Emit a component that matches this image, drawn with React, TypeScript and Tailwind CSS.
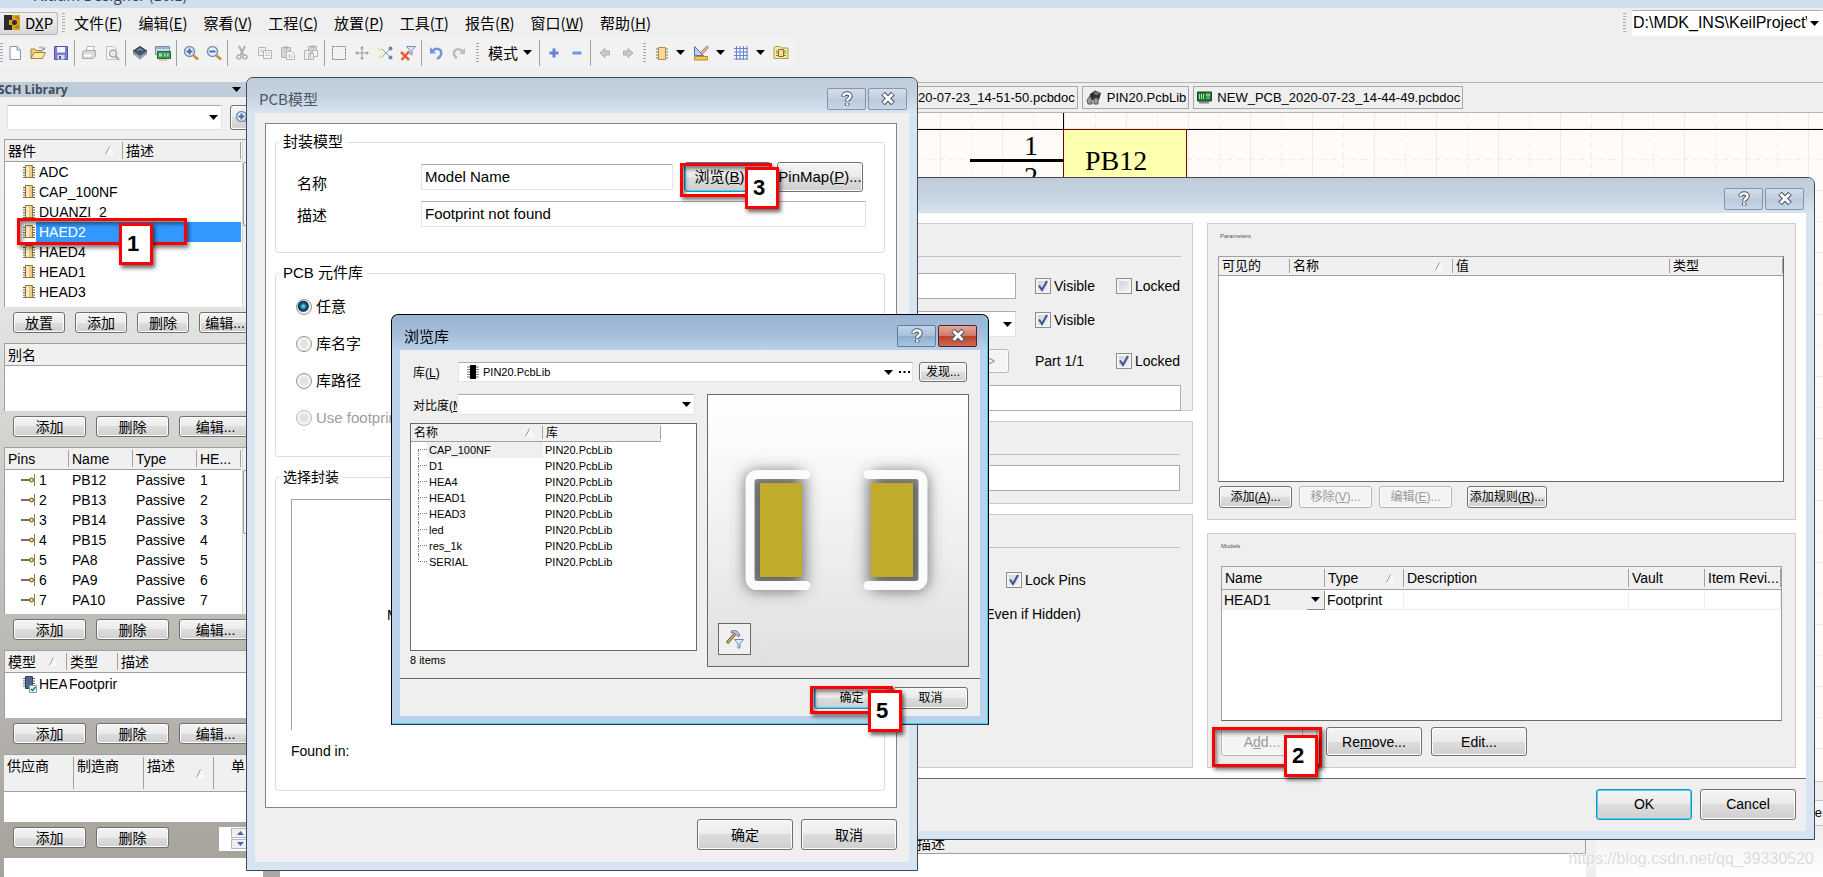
import { useState } from "react"
import type { ReactNode } from "react"

const cjk = "font-['Liberation_Sans','Noto_Sans_CJK_SC',sans-serif]"
const menuFont = "font-['Noto_Sans_CJK_SC',sans-serif]"
const btnBase = "shrink-0 whitespace-nowrap border rounded-[3px] bg-[linear-gradient(#f4f4f4,#ebebeb_50%,#dddddd_50%,#cfcfcf)] disabled:border-[#b4b8ba] disabled:bg-none disabled:bg-[#f4f4f4] disabled:text-[#9a9a9a]"
const btn = btnBase + " border-[#707070] shadow-[inset_0_0_0_1px_#fcfcfc]"
const btnBlue = btnBase + " border-[#2a8dbb] shadow-[inset_0_0_0_1px_#49d3fb]"
const field = "min-w-0 rounded-[1px] border border-[#e2e3ea] border-t-[#abadb3] bg-white px-[3px] pb-[2px] outline-none"

const menus = [
  ["文件", "F"], ["编辑", "E"], ["察看", "V"], ["工程", "C"], ["放置", "P"],
  ["工具", "T"], ["报告", "R"], ["窗口", "W"], ["帮助", "H"],
]
const parts = ["ADC", "CAP_100NF", "DUANZI_2", "HAED2", "HAED4", "HEAD1", "HEAD3"]
const pins = [
  ["1", "PB12"], ["2", "PB13"], ["3", "PB14"], ["4", "PB15"],
  ["5", "PA8"], ["6", "PA9"], ["7", "PA10"],
]
const footprints = ["CAP_100NF", "D1", "HEA4", "HEAD1", "HEAD3", "led", "res_1k", "SERIAL"]

type Col = { label: string; w: string; sort?: boolean }

function Arrow({ className = "" }: { className?: string }) {
  return (
    <svg className={`pointer-events-none shrink-0 ${className}`} width="9" height="5" viewBox="0 0 9 5">
      <path d="M0 0h9L4.5 5z" fill="#000" />
    </svg>
  )
}

function Sort() {
  return (
    <svg width="9" height="9" viewBox="0 0 9 9" className="shrink-0 self-center">
      <path d="M8 8.5H1L4.5 1z" fill="#f6f6f6" stroke="#fff" />
      <path d="M.5 8.5L4.5 .5" stroke="#9a9a9a" fill="none" />
    </svg>
  )
}

function Head({ cols, h, align = "items-center" }: { cols: Col[]; h: string; align?: string }) {
  return (
    <thead>
      <tr>
        {cols.map((c) => (
          <th key={c.label} className={`${c.w} border-b border-[#a0a0a0] bg-[#f0f0f0] p-0 py-[2px] text-left font-normal`}>
            <div className={`flex justify-between gap-1 overflow-hidden whitespace-nowrap border-r border-[#a0a0a0] pl-[3px] pr-2 ${align} ${h}`}>
              <span>{c.label}</span>
              {c.sort && <Sort />}
            </div>
          </th>
        ))}
      </tr>
    </thead>
  )
}

function Combo({ label, value = "", className = "", children }: { label: string; value?: string; className?: string; children?: ReactNode }) {
  return (
    <div className={`flex items-center border border-[#e2e3ea] border-t-[#abadb3] bg-white ${className}`}>
      {children}
      <select aria-label={label} className="h-full min-w-0 flex-1 appearance-none bg-transparent outline-none">
        <option>{value}</option>
      </select>
      <Arrow className="mx-[3px]" />
    </div>
  )
}

function Check({ label, checked = false, className = "" }: { label: string; checked?: boolean; className?: string }) {
  const [on, setOn] = useState(checked)
  return (
    <label className={`flex items-center gap-[3px] whitespace-nowrap ${className}`}>
      <span className="grid">
        <input
          type="checkbox"
          checked={on}
          onChange={() => setOn(!on)}
          className="col-start-1 row-start-1 h-4 w-4 appearance-none border border-[#8e8f8f] bg-[linear-gradient(135deg,#c9ced6,#f8f8f8)] shadow-[inset_0_0_0_2px_#f4f4f4]"
        />
        {on && (
          <svg className="pointer-events-none col-start-1 row-start-1" width="16" height="16" viewBox="0 0 16 16">
            <path d="M4 7.5l3 4.500 5-9" fill="none" stroke="#3f5595" strokeWidth="2.200" />
          </svg>
        )}
      </span>
      {label}
    </label>
  )
}

function CaptionButtons({ red = false }: { red?: boolean }) {
  const base = "flex h-[22px] w-[39px] items-center justify-center rounded-[2px] border"
  const plain = "border-[#8593ab] bg-[linear-gradient(#d2deea,#c3cfdf_50%,#b9c8da_50%,#c8d7e6)]"
  const help = red ? "border-[#5f7c9f] bg-[linear-gradient(#c0d3e8,#a8c0dc_50%,#8eabcc_50%,#a9c6e2)]" : plain
  const close = red ? "border-[#5b2024] bg-[linear-gradient(#e2a79b,#d1776a_50%,#b93f29_50%,#cf6a50)]" : plain
  return (
    <div className="flex gap-[2px]">
      <button aria-label="Help" className={`${base} ${help}`}>
        <svg width="14" height="16" viewBox="0 0 14 16" fill="none">
          <path d="M3.500 5.500C3.500 1.500 10.500 1.500 10.500 5.200c0 2.300-3.300 2.300-3.300 5.300M7.200 12v2.500" stroke="#4c5566" strokeWidth="4.500" />
          <path d="M3.500 5C3.500 1.500 10.500 1.500 10.500 5.200c0 2.300-3.300 2.300-3.300 4.800M7.200 12.300v1.900" stroke="#fff" strokeWidth="2.400" />
        </svg>
      </button>
      <button aria-label="Close" className={`${base} ${close}`}>
        <svg width="14" height="13" viewBox="0 0 14 13" fill="none">
          <path d="M2 1.500l10 10M12 1.500l-10 10" stroke="#4c5566" strokeWidth="5" />
          <path d="M2.500 2l9 9M11.500 2l-9 9" stroke="#fff" strokeWidth="3" />
        </svg>
      </button>
    </div>
  )
}

/* 16px toolbar drawings */
const glyphs: Record<string, ReactNode> = {
  page: <><path d="M3 1.500h7l3.500 3.500v9.500H3z" fill="#fff" stroke="#7f96b5" /><path d="M10 1.500v3.500h3.500" fill="#dbe6f5" stroke="#7f96b5" /></>,
  open: <><path d="M1 13V4h4l1.500 1.500H12V8" fill="#f5d27a" stroke="#a8823c" /><path d="M1 13.500L4 7.500h11.500L12.500 13.500z" fill="#fde9a9" stroke="#a8823c" /><path d="M9 3c2-2 4-1 4.500 1M15 2l-1 3-2.500-1.500" stroke="#6f8fc0" fill="none" /></>,
  save: <><path d="M1.500 1.500h13v13h-13z" fill="#7b7fd4" stroke="#5153a5" /><path d="M4 2h8v5.500H4z" fill="#f4f6ff" /><path d="M4.500 10h7v4.500h-7z" fill="#d7d9f3" /><path d="M6 11h2v3H6z" fill="#5153a5" /></>,
  print: <><path d="M5 6l1.500-4.500h7L12 6" fill="#fff" stroke="#b4b4b4" /><path d="M1.500 7L4 5.500h10.500V11L12 13.500H1.500z" fill="#d9d9d9" stroke="#aaa" /><path d="M3 10.500h8" stroke="#fff" strokeWidth="2" /></>,
  preview: <><path d="M2.500 1.500h7L12 4v10.500H2.500z" fill="#f8f8f8" stroke="#c0c0c0" /><circle cx="9" cy="8.500" r="3.500" fill="#e9e9e9" stroke="#aaa" strokeWidth="1.500" /><path d="M11.500 11l3.500 4" stroke="#aaa" strokeWidth="2" /></>,
  chip: <><path d="M8 1.500L15 6 8 10.500 1 6z" fill="#46566b" stroke="#2c3a4d" /><path d="M1 6v3.500L8 14.500V10.500zM15 6v3.500L8 14.500V10.500z" fill="#7d8ea5" /><path d="M2 9v2M4 10v2M6 11.500v2M10 11.500v2M12 10v2M14 9v2" stroke="#dbe2ea" /><path d="M5.500 5.500L8 4l2.500 1.500" stroke="#a5b3c5" fill="none" /></>,
  board: <><path d="M.5 1.500h14v8H.5z" fill="#c6d8ea" stroke="#7490af" /><path d="M1 3h13" stroke="#7490af" /><path d="M2.500 6.500h13v7h-13z" fill="#3c9a5f" stroke="#23673c" /><path d="M4 8.500h3v3H4zM9 8.500h1.500v3H9zM12 8.500h1.500v3H12z" fill="#a6dcae" /><path d="M4 15h8" stroke="#c9a544" /></>,
  zoomin: <><circle cx="6.500" cy="6.500" r="5" fill="#eaf2fc" stroke="#7a91b5" strokeWidth="1.500" /><path d="M6.500 3.500v6M3.500 6.500h6" stroke="#476ca8" strokeWidth="2" /><path d="M10.500 10.500l4.500 4" stroke="#c59a3c" strokeWidth="3" /></>,
  zoomout: <><circle cx="6.500" cy="6.500" r="5" fill="#eaf2fc" stroke="#7a91b5" strokeWidth="1.500" /><path d="M3.500 6.500h6" stroke="#476ca8" strokeWidth="2" /><path d="M10.500 10.500l4.500 4" stroke="#c59a3c" strokeWidth="3" /></>,
  cut: <><path d="M5 1l4.500 9M11 1L6.500 10" stroke="#b0b0b0" strokeWidth="2" /><circle cx="5" cy="12" r="2" fill="none" stroke="#b0b0b0" strokeWidth="1.500" /><circle cx="11" cy="12" r="2" fill="none" stroke="#b0b0b0" strokeWidth="1.500" /></>,
  copy: <><path d="M1.500 2.500h7v8h-7z" fill="#f6f6f6" stroke="#b5b5b5" /><path d="M6.500 5.500h8v8h-8z" fill="#f6f6f6" stroke="#b5b5b5" /><path d="M8 8h5M8 10.500h5M3 5h3M3 7h3" stroke="#c5c5c5" /></>,
  paste: <><path d="M1.500 2.500h9v10h-9z" fill="#d4d4d4" stroke="#b5b5b5" /><path d="M4 1.500h4v2H4z" fill="#aaa" /><path d="M6.500 6.500h5l3 3v5h-8z" fill="#f6f6f6" stroke="#b5b5b5" /><path d="M8 10h4M8 12h5" stroke="#c5c5c5" /></>,
  pastes: <><path d="M5.500 1.500h8v9h-8z" fill="#d4d4d4" stroke="#b5b5b5" /><path d="M8 .5h4v2H8z" fill="#aaa" /><path d="M9.500 5.500h5v6h-5z" fill="#f6f6f6" stroke="#b5b5b5" /><path d="M1.500 5.500h6v9h-6zM5.500 8.500h5v6h-5z" fill="#eee" stroke="#b5b5b5" /></>,
  select: <path d="M1.500 1.500h13v13h-13z" fill="none" stroke="#5f7ea5" strokeDasharray="2 1" />,
  move: <><path d="M8 2v12M2 8h12" stroke="#999" /><path d="M8 1L10 3.500H6zM8 15L6 12.500h4zM1 8l2.500-2v4zM15 8l-2.500-2v4z" fill="#999" /></>,
  shuffle: <><path d="M5 4l4 4-4 4" fill="none" stroke="#8c9db5" /><path d="M13 4L9 8l4 4" fill="none" stroke="#8c9db5" /><circle cx="3" cy="4" r="2" fill="#f3e79b" /><circle cx="3" cy="12" r="2" fill="#f3e79b" /><circle cx="13.500" cy="3.500" r="2" fill="#5f87b8" /><circle cx="13.500" cy="12.500" r="2" fill="#5f87b8" /></>,
  clear: <><path d="M1 7l8 8M9 6.500L1.500 15" stroke="#e2603f" strokeWidth="2.500" /><path d="M6.500 1.500h9l-3.500 4V10l-2-1V5.500z" fill="#dde6f2" stroke="#7d92b3" /></>,
  undo: <><path d="M2 2v6.500h6z" fill="#6e93da" /><path d="M4.500 6C8 2 14.500 4 13 9.500 12.500 11.500 11 13 9 14" fill="none" stroke="#6e93da" strokeWidth="2.500" /></>,
  redo: <><path d="M14 3v6H8z" fill="#bcbcbc" /><path d="M11.500 6.500C8 2.500 2 4.500 3 9.500 3.500 11 4.500 12.500 6 13" fill="none" stroke="#bcbcbc" strokeWidth="2.500" /></>,
  plus: <path d="M8 3.500v9M3.500 8h9" stroke="#6585d3" strokeWidth="3" />,
  minus: <path d="M3.500 8h9" stroke="#6b9be8" strokeWidth="3" />,
  left: <path d="M3 8l5-4.500V6h4.500v4H8v2.500z" fill="#c9c9c9" stroke="#adadad" />,
  right: <path d="M13 8L8 3.500V6H3.500v4H8v2.500z" fill="#c9c9c9" stroke="#adadad" />,
  part: <><path d="M2 4h12M2 7h12M2 10h12M2 13h12" stroke="#777" /><path d="M4.500 2.500h7v12h-7z" fill="#f6d99b" stroke="#b58b42" /></>,
  draw: <><path d="M1.500 1.500v9h9z" fill="#bcd0f2" stroke="#5273b8" /><path d="M7 8l7-7 1.500 1.500L9 9.500z" fill="#e9b6a4" stroke="#a27868" /><path d="M1.500 11.500h13v3.500h-13z" fill="#f3c553" stroke="#b98c28" /></>,
  grid: <path d="M3.500 1v14M7 1v14M10.500 1v14M14 1v14M1 3.500h14M1 7h14M1 10.500h14M1 14h14" stroke="#6288cd" />,
  folder: <><path d="M1 13.500V3l1.500-1.500H7L8.500 3H15v10.500z" fill="#f3ec9e" stroke="#a8a03c" /><path d="M3 6h10M3 8h10M3 10.500h10" stroke="#777" /><path d="M5.500 4.500h5v7h-5z" fill="#f6d99b" stroke="#8a6c35" /></>,
}

function Tool({ name, w = "w-[23px]" }: { name: string; w?: string }) {
  return (
    <button aria-label={name} className={`flex h-[24px] shrink-0 items-center justify-center ${w}`}>
      <svg width="16" height="16" viewBox="0 0 16 16">{glyphs[name]}</svg>
    </button>
  )
}

function Sep() {
  return <div className="mx-[2px] h-[26px] w-px shrink-0 bg-[#a0a0a0]" />
}

function Grip() {
  return <div className="h-[20px] w-[3px] shrink-0 bg-[repeating-linear-gradient(#a8a8a8_0_1px,transparent_1px_3px)]" />
}

function MenuBar() {
  return (
    <div className={`flex h-[30px] shrink-0 items-center overflow-hidden text-[15px] leading-[22px] ${menuFont}`}>
      <button className="flex h-[23px] w-[58px] items-center gap-1 rounded-r-[3px] border border-l-0 border-[#b5b5b5] bg-[linear-gradient(#f0f0f0,#d8d8d8)] pl-1">
        <svg width="17" height="17" viewBox="0 0 17 17">
          <path d="M0 0h8v15H0z" fill="#2b2b2b" />
          <path d="M8 0h8v15H8z" fill="#d9a520" />
          <path d="M5 5h3v5H5z" fill="#d9a520" />
          <circle cx="10.500" cy="7.500" r="2.500" fill="#2b2b2b" />
          <path d="M11 2h3v3M11 12.500h3V10" stroke="#8a6508" fill="none" />
        </svg>
        <span>D<u>X</u>P</span>
      </button>
      <div className="ml-1"><Grip /></div>
      <nav className="ml-[9px] flex gap-4">
        {menus.map(([label, key]) => (
          <button key={key} className="whitespace-nowrap">{label}(<u>{key}</u>)</button>
        ))}
      </nav>
      <div className={`ml-auto flex h-[28px] items-center gap-[6px] ${cjk}`}>
        <Grip />
        <Combo label="Path" value="D:\MDK_INS\KeilProject\" className="h-[26px] w-[191px] border-transparent text-[16px]" />
      </div>
    </div>
  )
}

function ToolBar() {
  return (
    <div className={`flex h-[29px] w-[795px] shrink-0 items-center bg-[#f2f2f2] ${menuFont}`}>
      <Grip />
      <Tool name="page" /><Tool name="open" /><Tool name="save" /><Sep />
      <Tool name="print" /><Tool name="preview" /><Sep />
      <Tool name="chip" /><Tool name="board" /><Sep />
      <Tool name="zoomin" /><Tool name="zoomout" /><Sep />
      <Tool name="cut" /><Tool name="copy" /><Tool name="paste" /><Tool name="pastes" /><Sep />
      <Tool name="select" /><Tool name="move" /><Tool name="shuffle" /><Tool name="clear" /><Sep />
      <Tool name="undo" /><Tool name="redo" />
      <div className="mx-[6px]"><Grip /></div>
      <button className="ml-[3px] mr-[5px] flex shrink-0 items-center gap-[5px] whitespace-nowrap text-[15px] leading-[22px]">模式<Arrow /></button>
      <Sep />
      <Tool name="plus" /><Tool name="minus" /><Sep />
      <Tool name="left" /><Tool name="right" />
      <div className="mx-1"><Grip /></div>
      <Tool name="part" /><Arrow className="mx-[3px]" />
      <Tool name="draw" w="w-[25px]" /><Arrow className="mx-[3px]" />
      <Tool name="grid" w="w-[25px]" /><Arrow className="mx-[3px]" />
      <Tool name="folder" w="w-[25px]" />
    </div>
  )
}

function SideButtons({ edit = true }: { edit?: boolean }) {
  return (
    <div className="mb-[10px] ml-[9px] mt-[5px] flex h-[21px] gap-[10px]">
      <button className={`${btn} w-[73px]`}>添加</button>
      <button className={`${btn} w-[73px]`}>删除</button>
      {edit && <button className={`${btn} w-[73px]`}>编辑...</button>}
      {!edit && (
        <div className="ml-[40px] flex h-[24px] w-[60px] bg-white pl-3 pt-px">
          <div className="flex flex-col gap-px">
            <button aria-label="Up" className="flex h-[10px] w-[18px] items-center justify-center border border-[#b5b8c4] bg-[#f0f0f0]">
              <svg width="7" height="4" viewBox="0 0 7 4"><path d="M0 4h7L3.500 0z" fill="#4a62b8" /></svg>
            </button>
            <button aria-label="Down" className="flex h-[10px] w-[18px] items-center justify-center border border-[#b5b8c4] bg-[#f0f0f0]">
              <svg width="7" height="4" viewBox="0 0 7 4"><path d="M0 0h7L3.500 4z" fill="#4a62b8" /></svg>
            </button>
          </div>
        </div>
      )}
    </div>
  )
}

function PartIcon() {
  return (
    <svg width="13" height="14" viewBox="0 0 13 14" className="shrink-0">
      <path d="M0 2.500h12M0 5h12M0 7.500h12M0 10h12M0 12.500h12" stroke="#6d6040" />
      <path d="M2.500 .5h7v12h-7z" fill="#eccb87" stroke="#8f7337" />
      <path d="M3 1h3v11H3z" fill="#fbeac4" />
    </svg>
  )
}

function Scroll() {
  return (
    <div className="h-full w-[9px] shrink-0 border-l border-[#d5d5d5] bg-[#f0f0f0] pt-[22px]">
      <div className="h-[64px] rounded-[2px] border border-[#9a9a9a] bg-[#f4f4f4]" />
    </div>
  )
}

function SideBar() {
  const [sel, setSel] = useState("HAED2")
  const box = "flex shrink-0 overflow-hidden border-l border-t border-[#a0a0a0] bg-white"
  const grid = "table-fixed border-separate border-spacing-0 self-start"
  return (
    <aside className={`flex w-[247px] shrink-0 flex-col overflow-hidden text-[14px] leading-[18px] ${cjk}`}>
      <div className="flex h-[15px] shrink-0 items-center justify-between bg-[#bfccd9] pr-[6px] font-['Open_Sans',sans-serif] text-[12px] font-bold leading-[14px] text-[#3d4b57]">
        <span className="-ml-[2px]">SCH Library</span>
        <Arrow />
      </div>
      <div className="flex flex-1 flex-col bg-[linear-gradient(#f0f0f0,#efefef_15%,#dcdcda_35%,#bfbdb9_65%,#a5a29b)] pl-1 pt-2">
        <div className="mb-[9px] ml-[3px] flex h-[25px] shrink-0 gap-2">
          <Combo label="Filter" className="w-[215px] shrink-0" />
          <button aria-label="Find" className={`${btn} w-[30px] pl-1`}>
            <svg width="16" height="16" viewBox="0 0 16 16">{glyphs.zoomin}</svg>
          </button>
        </div>

        <div className={`${box} h-[168px]`}>
          <table className={`mr-px w-[236px] shrink-0 ${grid}`}>
            <Head h="h-[17px]" cols={[{ label: "器件", w: "w-[118px]", sort: true }, { label: "描述", w: "w-[118px]" }]} />
            <tbody>
              {parts.map((p) => (
                <tr key={p} onClick={() => setSel(p)}>
                  <td colSpan={2} className="h-[20px] p-0 pl-[18px]">
                    <div className="flex items-center">
                      <PartIcon />
                      <span className={sel === p ? "flex-1 bg-[#3399ff] pl-[3px] leading-[20px] text-white" : "flex-1 pl-[3px] leading-[20px]"}>{p}</span>
                    </div>
                  </td>
                </tr>
              ))}
            </tbody>
          </table>
          <Scroll />
        </div>
        <div className="mb-[10px] ml-[9px] mt-[5px] flex h-[21px] gap-[10px]">
          <button className={`${btn} w-[52px]`}>放置</button>
          <button className={`${btn} w-[52px]`}>添加</button>
          <button className={`${btn} w-[52px]`}>删除</button>
          <button className={`${btn} w-[52px]`}>编辑...</button>
        </div>

        <div className={`${box} h-[68px]`}>
          <table className={`w-full ${grid}`}>
            <Head h="h-[17px]" cols={[{ label: "别名", w: "w-full" }]} />
          </table>
        </div>
        <SideButtons />

        <div className={`${box} h-[167px]`}>
          <table className={`mr-px w-[236px] shrink-0 ${grid}`}>
            <Head h="h-[17px]" cols={[{ label: "Pins", w: "w-[64px]" }, { label: "Name", w: "w-[64px]" }, { label: "Type", w: "w-[64px]" }, { label: "HE...", w: "w-[44px]" }]} />
            <tbody>
              {pins.map(([n, name]) => (
                <tr key={n}>
                  <td className="h-[20px] p-0 pl-4">
                    <div className="flex items-center gap-1">
                      <svg width="14" height="12" viewBox="0 0 14 12">
                        <path d="M0 6h9" stroke="#4d4027" strokeWidth="1.500" />
                        <circle cx="10.500" cy="6" r="2" fill="#f7e04b" stroke="#5a4a20" />
                        <path d="M13.500 0v12" stroke="#8a7a4d" />
                      </svg>
                      {n}
                    </div>
                  </td>
                  <td className="p-0 pl-[3px]">{name}</td>
                  <td className="p-0 pl-[3px]">Passive</td>
                  <td className="p-0 pl-[3px]">{n}</td>
                </tr>
              ))}
            </tbody>
          </table>
          <Scroll />
        </div>
        <SideButtons />

        <div className={`${box} h-[68px]`}>
          <table className={`w-full ${grid}`}>
            <Head h="h-[17px]" cols={[{ label: "模型", w: "w-[62px]", sort: true }, { label: "类型", w: "w-[51px]" }, { label: "描述", w: "w-[140px]" }]} />
            <tbody>
              <tr>
                <td className="h-[22px] overflow-hidden whitespace-nowrap p-0 pl-[18px]">
                  <div className="flex items-center gap-[2px]">
                    <svg width="14" height="17" viewBox="0 0 14 17" className="shrink-0">
                      <path d="M0 2.500h12M0 5h12M0 7.500h12M0 10h12" stroke="#666" />
                      <path d="M2.500 .5h7v12h-7z" fill="#53658f" stroke="#39465f" />
                      <path d="M6.500 9.500h7v7h-7z" fill="#e4f3f3" stroke="#8c9aa8" />
                      <path d="M8 13l1.500 1.500L12.500 11" stroke="#12807a" fill="none" strokeWidth="1.500" />
                    </svg>
                    HEA
                  </div>
                </td>
                <td className="overflow-hidden whitespace-nowrap p-0 pl-[2px]">Footprir</td>
                <td className="p-0" />
              </tr>
            </tbody>
          </table>
        </div>
        <SideButtons />

        <div className="flex h-[68px] shrink-0 overflow-hidden border-t border-[#a0a0a0] bg-white">
          <table className={`w-[280px] shrink-0 ${grid}`}>
            <Head
              h="h-[32px]"
              align="items-start"
              cols={[{ label: "供应商", w: "w-[70px]" }, { label: "制造商", w: "w-[70px]" }, { label: "描述", w: "w-[70px]", sort: true }, { label: "　单", w: "w-[70px]" }]}
            />
          </table>
        </div>
        <SideButtons edit={false} />
        <div className="min-h-4 flex-1 bg-white" />
      </div>
    </aside>
  )
}

function Sheet() {
  return (
    <svg className="min-h-0 w-full flex-1" height="100">
      <defs>
        <pattern id="grid" width="62" height="62" patternUnits="userSpaceOnUse">
          <path d="M11.500 0v62M0 15.500h62" stroke="#ecebe8" fill="none" />
          <path d="M42.500 0v62M0 46.500h62" stroke="#eeedea" strokeDasharray="5 5" fill="none" />
        </pattern>
      </defs>
      <rect width="100%" height="100%" fill="#fffcf8" />
      <rect width="100%" height="100%" fill="url(#grid)" />
      <path d="M0 16.500h1600M816.500 0v17" stroke="#000" />
      <rect x="816.500" y="16.500" width="123" height="400" fill="#ffffb0" stroke="#800000" />
      <path d="M723 47.500h94" stroke="#000" strokeWidth="3" />
      <g className="font-['Liberation_Serif',serif] text-[28px]">
        <text x="777" y="42">1</text>
        <text x="777" y="73">2</text>
        <text x="838" y="57">PB12</text>
      </g>
    </svg>
  )
}

function Documents() {
  const tab = "flex h-[23px] shrink-0 items-center gap-1 whitespace-nowrap border border-[#a8a8a8] px-[2px]"
  return (
    <main className={`flex min-w-0 flex-1 flex-col ${cjk}`}>
      <div className="flex h-[31px] shrink-0 items-center gap-1 border-y border-[#b4b4b4] pl-[582px] text-[13px]">
        <button className={tab}>NEW_PCB_2020-07-23_14-51-50.pcbdoc</button>
        <button className={tab}>
          <svg width="18" height="15" viewBox="0 0 16 15">
            <path d="M4 4l5-3.500 6 2.500-2 7H3z" fill="#2f2f2f" />
            <path d="M7 2.500l4-1 3 2-4 2z" fill="#777" />
            <path d="M1 10l3-4 2 4v4H2zM8 8h4v6H8z" fill="#9a9a9a" stroke="#555" />
          </svg>
          PIN20.PcbLib
        </button>
        <button className={tab}>
          <svg width="17" height="13" viewBox="0 0 16 13">
            <path d="M1 1h14v9H1z" fill="#1f7a4a" stroke="#12452c" />
            <path d="M3 3v5M5 3v5M7 3v5M10 3h3v2h-3zM10 7h3" stroke="#b9e36b" fill="none" />
            <path d="M3 11.500h9" stroke="#222" strokeWidth="2" strokeDasharray="1 1" />
          </svg>
          NEW_PCB_2020-07-23_14-44-49.pcbdoc
        </button>
      </div>
      <Sheet />
      <div className="flex h-[96px] shrink-0 flex-col bg-white">
        <div className="h-[20px] shrink-0 border-y border-[#c4c4c4] bg-[#efefef]" />
        <div className="flex h-[25px] shrink-0 items-center justify-end border-b border-[#c4c4c4] bg-[#f6f6f6] pr-px text-[13px]">e</div>
        <div className="flex flex-1">
          <div className="w-[16px] bg-white" />
          <div className="w-[17px] bg-[#aaa8a4]" />
          <div className="flex min-w-0 flex-1 flex-col">
            <div className="flex h-[28px] items-end border-b border-r border-[#a0a0a0] bg-[#efefef] pl-[637px] text-[14px] leading-[18px]">描述</div>
          </div>
          <div className="w-[10px] bg-[#efefef]" />
          <div className="w-[227px] bg-[linear-gradient(#efefef,#ffffff)]" />
        </div>
      </div>
    </main>
  )
}

function PropertiesDialog() {
  const panel = "border border-[#cccccc] bg-[#efefef]"
  const rule = "h-[33px] shrink-0 border-b border-[#c0c0cc]"
  const box = "border border-[#abadb3] bg-white px-1 outline-none"
  const cell = "border-b border-r border-[#ededed] p-0"
  return (
    <section className={`absolute left-[500px] right-[8px] top-[177px] flex flex-col rounded-t-[7px] border border-[#43484f] bg-[#d7e4f2] px-2 pb-2 text-[14px] leading-[18px] ${cjk}`}>
      <header className="-mx-2 flex h-[35px] items-center justify-end rounded-t-[7px] bg-[linear-gradient(#bfccd9,#c5d2df_50%,#d7e4f2)] pr-[10px] pt-[6px]">
        <CaptionButtons />
      </header>
      <div className="flex gap-[14px] border-b border-[#6b6b6b] bg-white px-[10px] py-[10px]">
        <div className="flex min-w-0 flex-1 flex-col gap-[10px]">
          <div className={`${panel} h-[188px] pl-3 pr-[11px]`}>
            <div className={rule} />
            <div className="mt-4 grid grid-cols-[1fr_81px_65px] items-center gap-y-3">
              <div className="pr-[19px]"><input aria-label="Designator" className={`${box} h-[26px] w-full`} /></div>
              <Check label="Visible" checked />
              <Check label="Locked" />
              <div className="pr-[19px]"><Combo label="Comment" className="h-[26px]" /></div>
              <Check label="Visible" checked className="self-start" />
              <span />
              <div className="flex justify-end pr-[26px]"><button disabled className={`${btn} h-[24px] w-[36px]`}>&gt;</button></div>
              <span>Part 1/1</span>
              <Check label="Locked" checked />
              <input aria-label="Description" className={`${box} col-span-3 h-[26px]`} />
            </div>
          </div>
          <div className={`${panel} h-[83px] pl-3 pr-3`}>
            <div className={rule} />
            <input aria-label="Link" className={`${box} mt-[10px] h-[26px] w-full`} />
          </div>
          <div className={`${panel} flex-1 pl-3 pr-3`}>
            <div className={rule} />
            <div className="ml-auto mt-[23px] w-[174px]"><Check label="Lock Pins" checked /></div>
            <p className="mt-4 pr-[99px] text-right">Show All Pins On Sheet (Even if Hidden)</p>
          </div>
        </div>

        <div className="flex w-[589px] shrink-0 flex-col gap-[13px]">
          <div className={`${panel} h-[297px] pl-[10px] pr-[11px]`}>
            <h3 className="h-[32px] pl-[2px] pt-2 text-[6px] leading-[8px] text-[#555]">Parameters</h3>
            <div className="h-[226px] border border-[#a0a0a0] border-b-[#696969] border-r-[#696969] bg-white">
              <table className="w-full table-fixed border-separate border-spacing-0">
                <Head h="h-[14px] text-[13px]" cols={[{ label: "可见的", w: "w-[71px]" }, { label: "名称", w: "w-[163px]", sort: true }, { label: "值", w: "w-[217px]" }, { label: "类型", w: "w-auto" }]} />
              </table>
            </div>
            <div className="mt-1 flex gap-[7px] pl-px text-[12px]">
              <button className={`${btn} h-[22px] w-[73px]`}>添加(<u>A</u>)...</button>
              <button disabled className={`${btn} h-[22px] w-[73px]`}>移除(<u>V</u>)...</button>
              <button disabled className={`${btn} h-[22px] w-[73px]`}>编辑(<u>E</u>)...</button>
              <button className={`${btn} ml-2 h-[22px] w-[80px]`}>添加规则(<u>R</u>)...</button>
            </div>
          </div>
          <div className={`${panel} h-[235px] px-[13px]`}>
            <h3 className="h-[32px] pt-2 text-[6px] leading-[8px] text-[#555]">Models</h3>
            <div className="h-[155px] border border-[#a0a0a0] border-b-[#696969] bg-white">
              <table className="w-full table-fixed border-separate border-spacing-0">
                <Head h="h-[18px]" cols={[{ label: "Name", w: "w-[103px]" }, { label: "Type", w: "w-[79px]", sort: true }, { label: "Description", w: "w-[225px]" }, { label: "Vault", w: "w-[76px]" }, { label: "Item Revi...", w: "w-auto" }]} />
                <tbody>
                  <tr className="text-left">
                    <td className="h-[20px] bg-[#f0f0f0] p-0 pl-[2px]">
                      <div className="flex items-center justify-between">
                        HEAD1
                        <button aria-label="Choose" className="flex h-[19px] w-[18px] items-center justify-center border-b border-r border-[#8a8a8a]"><Arrow /></button>
                      </div>
                    </td>
                    <td className={`${cell} pl-[2px]`}>Footprint</td>
                    <td className={cell} />
                    <td className={cell} />
                    <td className={cell} />
                  </tr>
                </tbody>
              </table>
            </div>
            <div className="mt-[6px] flex gap-[9px]">
              <button disabled className={`${btn} flex h-[29px] w-[96px] items-center`}>
                <span className="flex-1">A<u>d</u>d...</span>
                <span className="h-full w-[14px] border-l border-[#b4b8ba]" />
              </button>
              <button className={`${btn} h-[29px] w-[96px]`}>Re<u>m</u>ove...</button>
              <button className={`${btn} h-[29px] w-[96px]`}>Edit...</button>
            </div>
          </div>
        </div>
      </div>
      <footer className="flex h-[52px] items-center justify-end gap-2 bg-[#efefef] pb-[2px] pr-[10px]">
        <button className={`${btnBlue} h-[31px] w-[96px]`}>OK</button>
        <button className={`${btn} h-[31px] w-[96px]`}>Cancel</button>
      </footer>
    </section>
  )
}

function Radio({ label, value, off = false, picked, pick }: { label: string; value: string; off?: boolean; picked: string; pick: (v: string) => void }) {
  return (
    <label className={`flex h-4 items-center gap-1 whitespace-nowrap ${off ? "text-[#9d9d9d]" : ""}`}>
      <input
        type="radio"
        name="library"
        disabled={off}
        checked={picked === value}
        onChange={() => pick(value)}
        className="h-4 w-4 shrink-0 appearance-none rounded-full border border-[#8e8f8f] bg-[radial-gradient(#dcdcdc,#f8f8f8)] shadow-[inset_0_0_0_2px_#f4f4f4] checked:bg-[radial-gradient(circle_at_45%_45%,#5cc3ea_0_1px,#1a5f8c_3px,#0d2c44_5px,#f4f4f4_6px)] checked:shadow-none disabled:border-[#b8b8b8]"
      />
      {label}
    </label>
  )
}

function ModelDialog() {
  const [lib, setLib] = useState("any")
  const group = "min-w-0 rounded-[3px] border border-[#d5dfe5]"
  const legend = "ml-[3px] px-1 leading-[20px]"
  return (
    <section className={`absolute left-[246px] top-[77px] flex w-[672px] flex-col rounded-t-[7px] border border-[#43484f] bg-[#d7e4f2] px-2 pb-2 text-[15px] leading-[20px] ${cjk}`}>
      <header className="-mx-2 flex h-[35px] items-center justify-between rounded-t-[7px] bg-[linear-gradient(#bfccd9,#c5d2df_50%,#d7e4f2)] pl-3 pr-[10px] pt-[6px]">
        <h2 className={`text-[#4c5863] ${menuFont}`}>PCB模型</h2>
        <CaptionButtons />
      </header>
      <div className="bg-[#efefef] pb-[12px] pl-[10px] pr-3 pt-[10px]">
        <div className="flex flex-col gap-[10px] border border-[#84848f] bg-white pb-4 pl-[9px] pr-[11px] pt-2">
          <fieldset className={`${group} h-[121px]`}>
            <legend className={legend}>封装模型</legend>
            <div className="flex pl-[21px]">
              <div className="flex w-[124px] shrink-0 flex-col gap-3 pt-[22px]">
                <label htmlFor="name">名称</label>
                <label htmlFor="desc">描述</label>
              </div>
              <div className="flex flex-col gap-[11px] pt-3">
                <div className="flex h-[26px] items-center">
                  <input id="name" defaultValue="Model Name" className={`${field} h-full w-[252px]`} />
                  <button className={`${btnBlue} ml-[11px] h-[30px] w-[87px] pr-4`}>浏览(<u>B</u>)</button>
                  <button className={`${btn} ml-[6px] h-[30px] w-[86px]`}>PinMap(<u>P</u>)...</button>
                </div>
                <input id="desc" defaultValue="Footprint not found" className={`${field} h-[26px] w-[445px]`} />
              </div>
            </div>
          </fieldset>
          <fieldset className={`${group} h-[194px]`}>
            <legend className={legend}>PCB 元件库</legend>
            <div className="flex flex-col gap-[21px] pl-5 pt-4">
              <Radio label="任意" value="any" picked={lib} pick={setLib} />
              <Radio label="库名字" value="name" picked={lib} pick={setLib} />
              <Radio label="库路径" value="path" picked={lib} pick={setLib} />
              <Radio label="Use footprint" value="part" off picked={lib} pick={setLib} />
            </div>
          </fieldset>
          <fieldset className={`${group} h-[324px] text-[14px]`}>
            <legend className={legend}>选择封装</legend>
            <div className="ml-[15px] mr-5 mt-3 h-[231px] border-l border-t border-[#a0a0a0] pl-[95px] pt-[105px]">Model</div>
            <p className="ml-[15px] mt-[11px]">Found in:</p>
          </fieldset>
        </div>
        <div className="mt-[11px] flex justify-end gap-2 text-[14px]">
          <button className={`${btn} h-[31px] w-[96px]`}>确定</button>
          <button className={`${btn} h-[31px] w-[96px]`}>取消</button>
        </div>
      </div>
    </section>
  )
}

function Preview() {
  return (
    <div className="flex h-[273px] min-w-0 flex-1 flex-col justify-end border border-[#696969] bg-[linear-gradient(#ffffff,#fafafa_20%,#e0e0e0)] px-[10px] pb-[11px]">
      <svg width="240" height="160" viewBox="2 0 240 160" className="mb-[13px] self-center overflow-visible">
        <defs>
          <filter id="soft" x="-30%" y="-30%" width="160%" height="160%"><feGaussianBlur stdDeviation="8" /></filter>
        </defs>
        <g fill="#444" filter="url(#soft)">
          <rect x="30" y="22" width="58" height="118" rx="8" opacity="0.800" />
          <rect x="153" y="22" width="58" height="118" rx="8" opacity="0.800" />
        </g>
        <path d="M90 24.500H41a7 7 0 0 0-7 7v97a7 7 0 0 0 7 7h49M152 24.500h48a7 7 0 0 1 7 7v97a7 7 0 0 1-7 7h-48" fill="none" stroke="#fbfbfb" strokeWidth="9" strokeLinecap="round" />
        <rect x="44" y="33" width="42" height="94" fill="#c2aa2a" />
        <rect x="155" y="33" width="42" height="94" fill="#c2aa2a" />
      </svg>
      <button aria-label="Tools" className="flex h-[32px] w-[33px] items-center justify-center border border-[#696969] bg-[#f0f0f0]">
        <svg width="20" height="20" viewBox="0 0 20 20">
          <path d="M2 14L10 5" stroke="#6b5230" strokeWidth="3" />
          <path d="M2.500 13.500L10 5" stroke="#e0b56b" strokeWidth="1.200" />
          <path d="M6 2.500c3-2 6-1 8 2l1 2-2 1-3-3-4-1z" fill="#b9c4d6" stroke="#62708a" />
          <path d="M9.500 10.500h9l-3.500 4V19h-2v-4.500z" fill="#dfe9f5" stroke="#7088a8" />
        </svg>
      </button>
    </div>
  )
}

function BrowseDialog() {
  const [sel, setSel] = useState("CAP_100NF")
  const dot = "border-dotted border-[#808080]"
  return (
    <section className={`absolute left-[391px] top-[314px] flex w-[598px] flex-col rounded-t-[7px] border border-black border-b-[#1c3d4d] bg-[#b9d1ea] px-2 pb-2 text-[12px] leading-[16px] shadow-[inset_-1px_-1px_0_#3fd0ea] ${cjk}`}>
      <header className="-ml-2 -mr-[7px] flex h-[35px] items-center justify-between rounded-t-[7px] bg-[linear-gradient(#99b4d1,#a3bdd9_50%,#b9d1ea)] pl-3 pr-[10px] pt-[6px]">
        <h2 className={`text-[15px] leading-[20px] ${menuFont}`}>浏览库</h2>
        <CaptionButtons red />
      </header>
      <div className="border-b border-[#6b6b6b] bg-[#efefef] pb-[11px] pl-[10px] pr-[11px] pt-3">
        <div className="flex items-center pl-[3px] pr-[2px]">
          <span className="w-[45px] pt-[2px]">库(<u>L</u>)</span>
          <Combo label="Library" value="PIN20.PcbLib" className="h-[20px] min-w-0 flex-1 pl-2 pr-4 text-[11px]">
            <svg width="12" height="14" viewBox="0 0 12 14" className="mr-1 shrink-0">
              <path d="M0 2h12M0 4.500h12M0 7h12M0 9.500h12M0 12h12" stroke="#777" />
              <path d="M3 0h6v14H3z" fill="#000" />
            </svg>
          </Combo>
          <svg width="12" height="2" viewBox="0 0 12 2" className="-ml-[14px] mr-[2px] shrink-0">
            <path d="M0 0h2v2H0zM4.500 0h2v2h-2zM9 0h2v2H9z" />
          </svg>
          <button className={`${btn} ml-[6px] h-[20px] w-[48px]`}>发现...</button>
        </div>
        <div className="mt-3 flex gap-[10px]">
          <div className="w-[287px] shrink-0">
            <div className="flex items-center pl-[3px] pr-[2px]">
              <span className="w-[44px] overflow-hidden whitespace-nowrap pt-[2px]">对比度(<u>M</u>)</span>
              <Combo label="Mask" className="h-[21px] flex-1" />
            </div>
            <div className="mt-2 h-[228px] border border-[#696969] bg-white">
              <table className="w-[250px] table-fixed border-separate border-spacing-0">
                <Head h="h-[13px]" cols={[{ label: "名称", w: "w-[132px]", sort: true }, { label: "库", w: "w-[118px]" }]} />
                <tbody className="text-[11px]">
                  {footprints.map((f, i) => (
                    <tr key={f} onClick={() => setSel(f)}>
                      <td className="h-[16px] p-0 pl-[7px]">
                        <div className="flex">
                          <span className="flex w-[9px] flex-col">
                            <span className={`h-2 border-b ${dot} ${i > 0 ? "border-l" : ""}`} />
                            <span className={`h-2 ${dot} ${i < footprints.length - 1 ? "border-l" : ""}`} />
                          </span>
                          <span className={sel === f ? "flex-1 bg-[#efefef] pl-[2px]" : "flex-1 pl-[2px]"}>{f}</span>
                        </div>
                      </td>
                      <td className="p-0 pl-[2px]">PIN20.PcbLib</td>
                    </tr>
                  ))}
                </tbody>
              </table>
            </div>
            <p className="mt-[2px] text-[11px] leading-[14px]">8 items</p>
          </div>
          <Preview />
        </div>
      </div>
      <footer className="flex h-[37px] items-center justify-end gap-1 bg-[#efefef] pr-3">
        <button className={`${btnBlue} h-[22px] w-[75px]`}>确定</button>
        <button className={`${btn} h-[22px] w-[75px]`}>取消</button>
      </footer>
    </section>
  )
}

/* numbered red callouts of the tutorial */
function Mark({ frame, badge, n }: { frame: string; badge: string; n: number }) {
  return (
    <>
      <div className={`pointer-events-none absolute border-[3px] border-[#fe0000] shadow-[2px_3px_4px_#00000080,inset_2px_3px_4px_#00000080] ${frame}`} />
      <div className={`absolute flex h-[42px] w-[34px] items-center border-[3px] border-[#fe0000] bg-white pl-[5px] text-[22px] font-bold leading-none shadow-[2px_3px_4px_#00000099] font-['Liberation_Sans',sans-serif] ${badge}`}>{n}</div>
    </>
  )
}

export default function App() {
  return (
    <div className="relative flex h-screen flex-col overflow-hidden bg-[#efefef] text-black">
      <div className={`flex h-2 shrink-0 items-end overflow-hidden bg-[#cfdfee] pb-[3px] pl-[34px] text-[15px] leading-[20px] text-[#444] ${menuFont}`}>
        Altium Designer (16.1)
      </div>
      <MenuBar />
      <ToolBar />
      <div className="mt-[15px] flex min-h-0 flex-1">
        <SideBar />
        <Documents />
      </div>
      <PropertiesDialog />
      <ModelDialog />
      <BrowseDialog />
      <Mark n={1} frame="left-[17px] top-[218px] h-[27px] w-[170px]" badge="left-[119px] top-[223px]" />
      <Mark n={3} frame="left-[680px] top-[163px] h-[34px] w-[92px]" badge="left-[745px] top-[167px]" />
      <Mark n={2} frame="left-[1212px] top-[727px] h-[40px] w-[110px]" badge="left-[1284px] top-[735px]" />
      <Mark n={5} frame="left-[810px] top-[686px] h-[28px] w-[83px]" badge="left-[868px] top-[690px]" />
      <a href="https://blog.csdn.net/qq_39330520" className="absolute bottom-[8px] right-[9px] text-[16px] leading-[20px] text-[#dcdcdc] [text-shadow:1px_1px_0_#fff] font-['Liberation_Sans',sans-serif]">
        https://blog.csdn.net/qq_39330520
      </a>
    </div>
  )
}
